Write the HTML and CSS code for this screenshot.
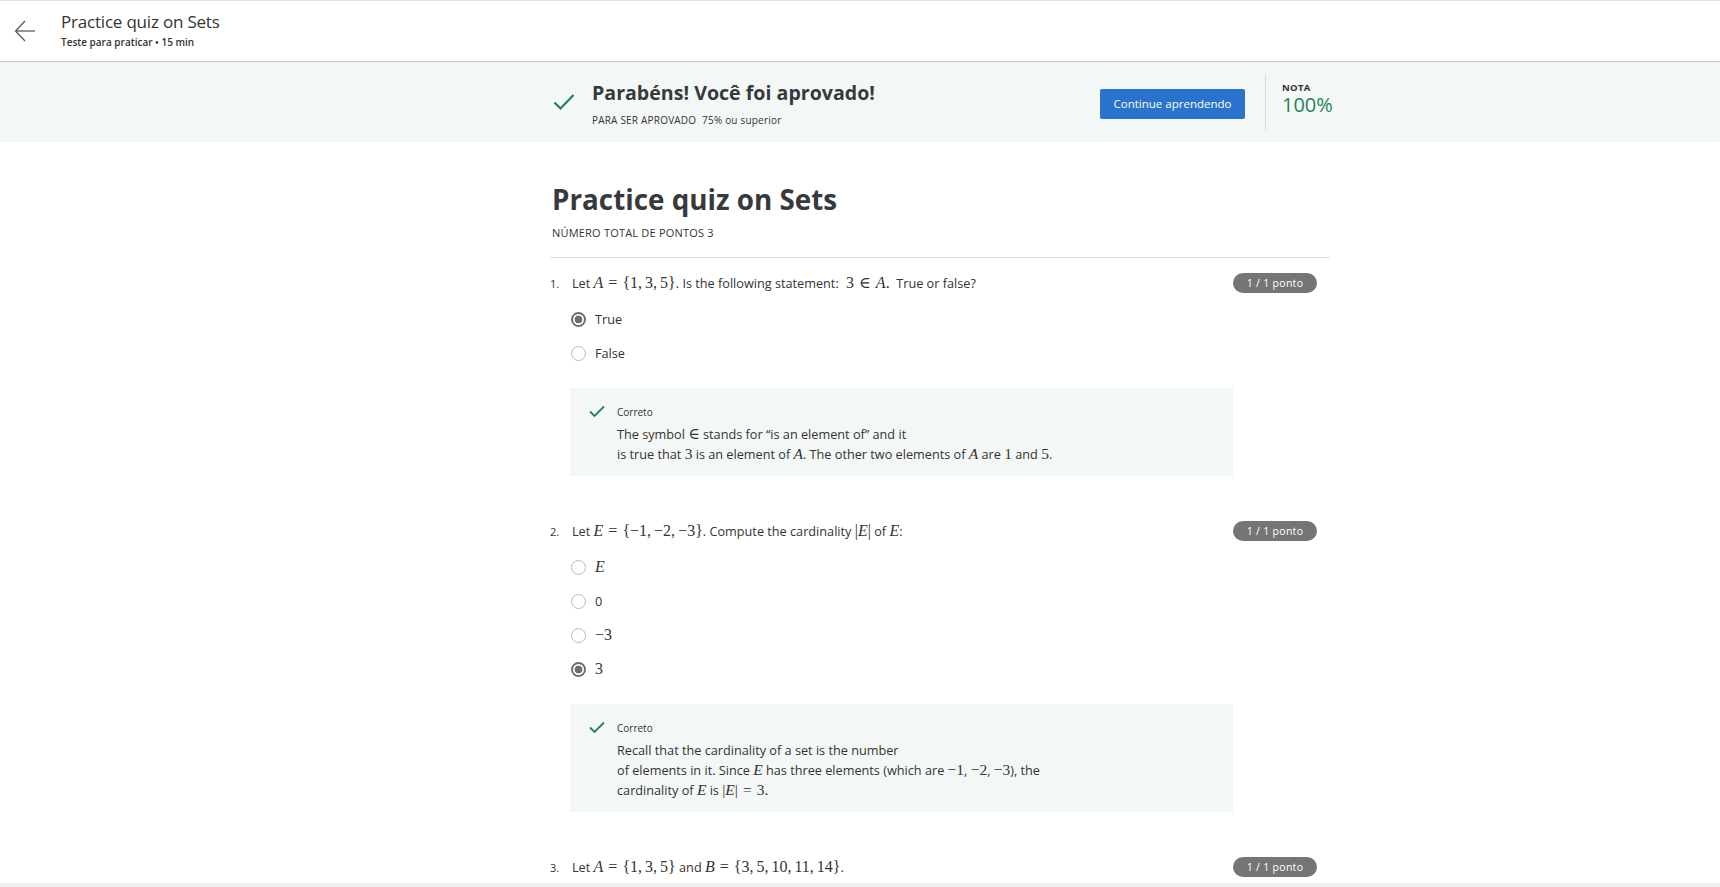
FILE: index.html
```html
<!DOCTYPE html>
<html lang="pt">
<head>
<meta charset="utf-8">
<title>Practice quiz on Sets</title>
<link rel="stylesheet" href="styles.css">
</head>
<body>
<header class="topbar">
  <a class="back" href="#" aria-label="Voltar">
    <svg width="22" height="24" viewBox="0 0 22 24">
      <path d="M2 12 H21" stroke="#8a8a8a" stroke-width="1.8" fill="none"/>
      <path d="M11 2 L1.5 12 L11 22" stroke="#555" stroke-width="1.2" fill="none"/>
    </svg>
  </a>
  <div class="head-text">
    <div class="head-title">Practice quiz on Sets</div>
    <div class="head-sub">Teste para praticar • 15 min</div>
  </div>
</header>

<section class="banner">
  <div class="column banner-row">
    <svg class="banner-check" width="22" height="18" viewBox="0 0 22 18">
      <path d="M1.5 9.5 L7.5 15.5 L20.5 2" stroke="#1f8354" stroke-width="2.2" fill="none"/>
    </svg>
    <div class="banner-text">
      <div class="banner-title">Parabéns! Você foi aprovado!</div>
      <div class="banner-sub"><span class="req">PARA SER APROVADO</span> 75% ou superior</div>
    </div>
    <a class="btn" href="#">Continue aprendendo</a>
    <div class="vdiv"></div>
    <div class="grade">
      <div class="grade-label">NOTA</div>
      <div class="grade-value">100%</div>
    </div>
  </div>
</section>

<main class="column">
  <h1 class="quiz-title">Practice quiz on Sets</h1>
  <div class="total">NÚMERO TOTAL DE PONTOS 3</div>
  <div class="rule"></div>

  <div class="question">
    <div class="q-row">
      <span class="q-num">1.</span>
      <div class="q-text">Let <span class="mx"><i>A</i><span class="op">=</span>{1,<span class="ts"></span>3,<span class="ts"></span>5}</span>. Is the following statement: <span class="mx">&nbsp;3<span class="op">∈</span><i>A</i>.</span>&nbsp; True or false?</div>
      <span class="badge">1 / 1 ponto</span>
    </div>
    <ul class="options">
      <li class="opt"><span class="radio checked"></span><span>True</span></li>
      <li class="opt"><span class="radio"></span><span>False</span></li>
    </ul>
    <div class="feedback">
      <svg class="fb-check" width="16" height="13" viewBox="0 0 16 13">
        <path d="M1 6.5 L5.5 11 L15 1.5" stroke="#1f8354" stroke-width="1.8" fill="none"/>
      </svg>
      <div class="fb-body">
        <div class="fb-label">Correto</div>
        <div class="fb-text">The symbol <span class="mx sm">∈</span> stands for “is an element of” and it<br>is true that <span class="mx">3</span> is an element of <span class="mx"><i>A</i></span>. The other two elements of <span class="mx"><i>A</i></span> are <span class="mx">1</span> and <span class="mx">5</span>.</div>
      </div>
    </div>
  </div>

  <div class="question">
    <div class="q-row">
      <span class="q-num">2.</span>
      <div class="q-text">Let <span class="mx"><i>E</i><span class="op">=</span>{−1,<span class="ts"></span>−2,<span class="ts"></span>−3}</span>. Compute the cardinality <span class="mx">|<i>E</i>|</span> of <span class="mx"><i>E</i></span>:</div>
      <span class="badge">1 / 1 ponto</span>
    </div>
    <ul class="options">
      <li class="opt"><span class="radio"></span><span class="mx"><i>E</i></span></li>
      <li class="opt"><span class="radio"></span><span>0</span></li>
      <li class="opt"><span class="radio"></span><span class="mx">−3</span></li>
      <li class="opt"><span class="radio checked"></span><span class="mx">3</span></li>
    </ul>
    <div class="feedback">
      <svg class="fb-check" width="16" height="13" viewBox="0 0 16 13">
        <path d="M1 6.5 L5.5 11 L15 1.5" stroke="#1f8354" stroke-width="1.8" fill="none"/>
      </svg>
      <div class="fb-body">
        <div class="fb-label">Correto</div>
        <div class="fb-text">Recall that the cardinality of a set is the number<br>of elements in it. Since <span class="mx"><i>E</i></span> has three elements (which are <span class="mx">−1</span>, <span class="mx">−2</span>, <span class="mx">−3</span>), the<br>cardinality of <span class="mx"><i>E</i></span> is <span class="mx">|<i>E</i>|<span class="op">=</span>3.</span></div>
      </div>
    </div>
  </div>

  <div class="question">
    <div class="q-row">
      <span class="q-num">3.</span>
      <div class="q-text">Let <span class="mx"><i>A</i><span class="op">=</span>{1,<span class="ts"></span>3,<span class="ts"></span>5}</span> and <span class="mx"><i>B</i><span class="op">=</span>{3,<span class="ts"></span>5,<span class="ts"></span>10,<span class="ts"></span>11,<span class="ts"></span>14}</span>.</div>
      <span class="badge">1 / 1 ponto</span>
    </div>
  </div>
</main>
<div class="bottom-bar"></div>
</body>
</html>
```

FILE: styles.css
```css
html, body {
  margin: 0;
  padding: 0;
  overflow: hidden;
  height: 100%;
}
body {
  font-family: "Open Sans", "Liberation Sans", sans-serif;
  color: #333;
  background: #fff;
}

.topbar {
  height: 60px;
  border-top: 1px solid #e1e1e1;
  border-bottom: 1px solid #c8c8c8;
  display: flex;
  align-items: flex-start;
  box-sizing: content-box;
}
.back {
  display: block;
  width: 22px;
  height: 24px;
  margin: 18px 0 0 14px;
}
.back svg { display: block; }
.head-text {
  margin: 9px 0 0 25px;
}
.head-title {
  font-size: 17px;
  line-height: 24px;
  color: #333;
  letter-spacing: -0.2px;
}
.head-sub {
  font-size: 10px;
  line-height: 14px;
  font-weight: 600;
  margin-top: 1px;
  color: #333;
}

.column {
  width: 780px;
  margin-left: 550px;
}

.banner {
  background: #f3f8f6;
  height: 80px;
}
.banner-row {
  height: 80px;
  display: flex;
  align-items: center;
}
.banner-check {
  margin-left: 3px;
  margin-right: 17px;
  flex: none;
}
.banner-text {
  flex: 1;
  padding-top: 2px;
}
.banner-title {
  font-size: 19.6px;
  line-height: 26px;
  font-weight: 700;
  color: #373a3c;
}
.banner-sub {
  font-size: 10px;
  line-height: 14px;
  margin-top: 7px;
  color: #333;
  letter-spacing: 0.2px;
}
.banner-sub .req {
  font-weight: 500;
  margin-right: 3px;
}
.btn {
  flex: none;
  width: 145px;
  height: 30px;
  margin-top: 4px;
  background: #2a73cc;
  color: #fff;
  font-size: 11.5px;
  line-height: 30px;
  text-align: center;
  text-decoration: none;
  border-radius: 2px;
}
.vdiv {
  flex: none;
  width: 1px;
  height: 56px;
  background: #dcdcdc;
  margin: 0 16px 0 20px;
}
.grade {
  flex: none;
  width: 48px;
  height: 56px;
  padding-top: 7px;
  box-sizing: border-box;
}
.grade-label {
  font-size: 9.5px;
  line-height: 14px;
  font-weight: 700;
  color: #333;
  letter-spacing: 0.3px;
}
.grade-value {
  font-size: 20px;
  line-height: 22px;
  color: #1f8354;
  margin-top: -1px;
}

.quiz-title {
  margin: 39px 0 0 2px;
  font-size: 27.8px;
  line-height: 36px;
  font-weight: 700;
  color: #373a3c;
}
.total {
  margin: 9px 0 0 2px;
  font-size: 11px;
  line-height: 14px;
  font-weight: 500;
  letter-spacing: 0.2px;
  color: #333;
}
.rule {
  height: 1px;
  background: #e0e0e0;
  margin-top: 17px;
}

.question {
  padding-top: 15px;
  padding-bottom: 45px;
}
.question + .question { padding-top: 0; }
.q-row {
  display: flex;
  align-items: center;
  height: 20px;
}
.q-num {
  width: 22px;
  flex: none;
  font-size: 11px;
  color: #333;
}
.q-text {
  flex: 1;
  font-size: 12.7px;
  color: #333;
  white-space: nowrap;
}
.badge {
  flex: none;
  width: 84px;
  height: 20px;
  margin-right: 13px;
  border-radius: 10px;
  background: #757575;
  color: #fff;
  font-size: 10.5px;
  font-weight: 500;
  letter-spacing: 0.3px;
  line-height: 20px;
  text-align: center;
}

.mx {
  font-family: "Liberation Serif", "DejaVu Serif", serif;
  font-size: 16px;
  line-height: 1;
}
.mx.sm { font-size: 14px; }
.mx i { font-style: italic; }
.op { margin: 0 5px; }
.ts { display: inline-block; width: 3px; }

.options {
  list-style: none;
  margin: 9px 0 0 0;
  padding: 0 0 0 21px;
}
.opt {
  height: 34px;
  display: flex;
  align-items: center;
  font-size: 12.7px;
  color: #333;
}
.radio {
  width: 15px;
  height: 15px;
  box-sizing: border-box;
  border: 1.5px solid #b8b8b8;
  border-radius: 50%;
  margin-right: 9px;
  flex: none;
  background: #fff;
}
.radio.checked {
  border: 2px solid #6f6f6f;
  background: radial-gradient(circle, #6f6f6f 0 3.6px, #fff 4.2px);
}

.feedback {
  margin: 18px 0 0 20px;
  width: 663px;
  background: #f3f8f6;
  padding: 17px 19px 12px;
  box-sizing: border-box;
  display: flex;
  align-items: flex-start;
}
.fb-check {
  flex: none;
  margin: 0 12px 0 0;
}
.fb-label {
  font-size: 10px;
  line-height: 14px;
  font-weight: 500;
  color: #333;
}
.fb-text {
  margin-top: 5px;
  font-size: 12.7px;
  line-height: 20px;
  color: #333;
  white-space: nowrap;
}
.fb-text .mx { font-size: 15.5px; }

.bottom-bar {
  position: fixed;
  left: 0;
  right: 0;
  bottom: 0;
  height: 4px;
  background: #f0f0f0;
}
```
